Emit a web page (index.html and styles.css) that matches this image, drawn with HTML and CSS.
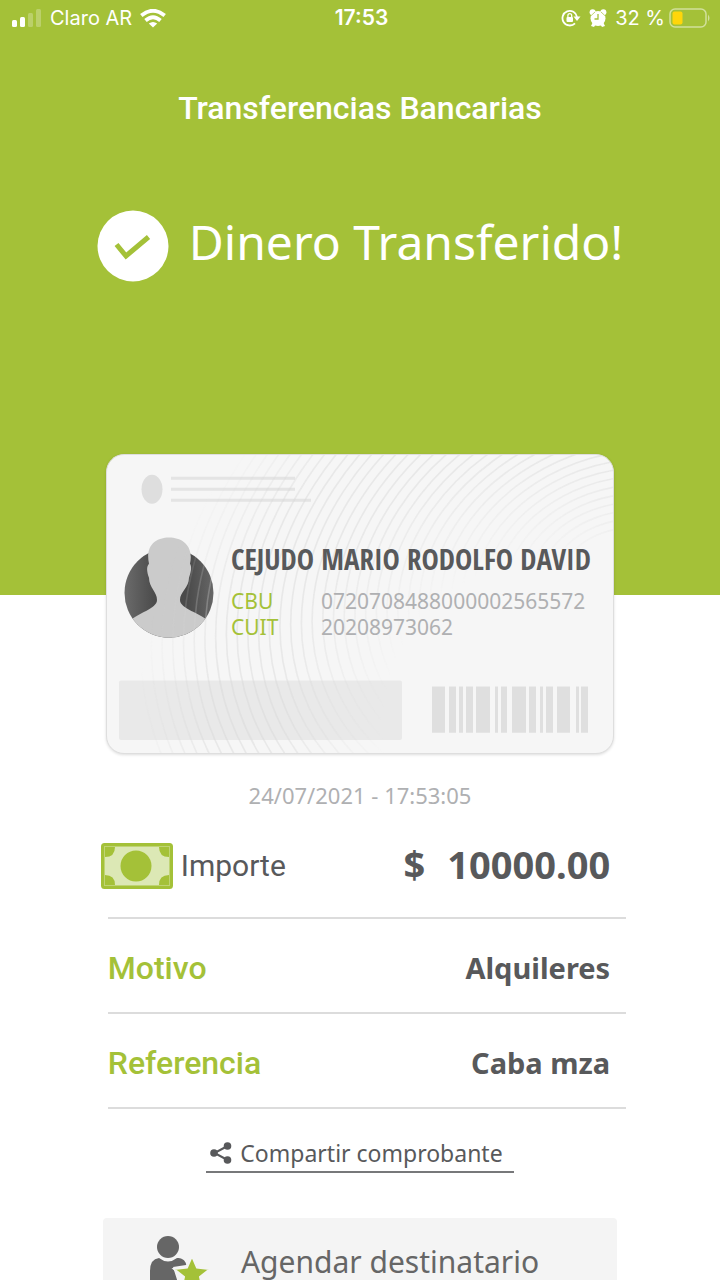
FILE: index.html
```html
<!DOCTYPE html>
<html lang="es">
<head>
<meta charset="utf-8">
<meta name="viewport" content="width=device-width, initial-scale=1">
<title>Transferencias Bancarias</title>
<link rel="stylesheet" href="styles.css">
</head>
<body>
<div class="screen">
  <header class="top">
    <div class="status">
      <div class="status-side">
        <svg width="30" height="18" viewBox="0 0 30 18" fill="#fff" aria-hidden="true"><rect y="11" width="5" height="7" rx="1.5"/><rect x="8" y="8" width="5" height="10" rx="1.5"/><g opacity=".25"><rect x="16" y="4" width="5" height="14" rx="1.5"/><rect x="24" width="5" height="18" rx="1.5"/></g></svg>
        <span>Claro AR</span>
        <svg width="26" height="19" viewBox="0 0 26 19" fill="none" stroke="#fff" stroke-width="3.8" aria-hidden="true"><path d="M1.300 6.500Q13-3 24.700 6.500M5.500 11.500Q13 5 20.500 11.500"/><path d="M13 18.500L8.800 14.600Q13 11.600 17.200 14.600Z" fill="#fff" stroke="none"/></svg>
      </div>
      <time class="clock">17:53</time>
      <div class="status-side status-right">
        <svg width="20" height="18" viewBox="0 0 20 18" fill="none" stroke="#fff" stroke-width="1.800" aria-hidden="true"><path d="M16 8A7.300 7.300 0 1 0 14 14.300"/><path d="M12.500 7.500h7l-3.500 4.500z" fill="#fff" stroke="none"/><rect x="5.500" y="8" width="6.500" height="5" rx="1" fill="#fff" stroke="none"/><path d="M6.900 8V6.500a1.900 1.900 0 0 1 3.800 0V8" stroke-width="1.300"/></svg>
        <svg width="18" height="18" viewBox="0 0 18 18" aria-hidden="true"><g fill="#fff"><circle cx="9" cy="9.500" r="7.500"/><circle cx="3.600" cy="3.300" r="3"/><circle cx="14.400" cy="3.300" r="3"/><path d="M2 17l2-4 3 2-2 3zM16 17l-2-4-3 2 2 3z"/></g><path d="M9 5v5H5.500" fill="none" stroke="#a4c138" stroke-width="1.300"/><path d="M2.200 6.500L6 3M15.800 6.500L12 3" stroke="#a4c138" stroke-width=".7"/></svg>
        <span>32 %</span>
        <svg class="battery" width="42" height="20" viewBox="0 0 42 20" aria-hidden="true"><rect x="1" y="1" width="36" height="18" rx="5" fill="none" stroke="#d1e09b" stroke-width="1.500"/><rect x="3.500" y="3.500" width="10" height="13" rx="2" fill="#ffd60a"/><path d="M39 6.500q3 3.500 0 7z" fill="#d1e09b"/></svg>
      </div>
    </div>
    <h1 class="title">Transferencias Bancarias</h1>
    <div class="hero">
      <svg width="72" height="72" viewBox="0 0 72 72" aria-hidden="true"><circle cx="36" cy="36" r="35.500" fill="#fff"/><path d="M19.500 34.500L29 46L51.500 27" fill="none" stroke="#a4c138" stroke-width="5"/></svg>
      <p class="hero-text">Dinero Transferido!</p>
    </div>
  </header>

  <main class="content">
    <section class="card">
      <svg class="card-art" viewBox="0 0 506 296" preserveAspectRatio="none" aria-hidden="true">
        <defs>
          <radialGradient id="fade" gradientUnits="userSpaceOnUse" cx="440" cy="270" r="410">
            <stop offset=".4" stop-color="#000"/><stop offset=".66" stop-color="#fff"/><stop offset=".82" stop-color="#fff"/><stop offset="1" stop-color="#000"/>
          </radialGradient>
          <mask id="arcs"><rect width="506" height="296" fill="url(#fade)"/></mask>
          <linearGradient id="dark"><stop stop-color="#6b6b6b"/><stop offset=".35" stop-color="#4a4a4a"/><stop offset=".7" stop-color="#4a4a4a"/><stop offset="1" stop-color="#666"/></linearGradient>
          <clipPath id="bust"><path d="M0 0H124V137H106.500A44.500 44.500 0 0 1 17.500 137H0Z"/></clipPath>
        </defs>
        <circle cx="62" cy="137" r="44.500" fill="url(#dark)"/>
        <path clip-path="url(#bust)" d="M42 108C38 90 49 82 62 82S87 90 83 108C85 111 84 116 82 122C82 132 73 136 73 144C73 153 94 157 101 165V190H23V165C30 157 50 153 50 144C50 136 42 132 42 122C40 117 39 111 42 108Z" fill="#cbcbcb"/>
        <ellipse cx="45" cy="34" rx="10.500" ry="14.500" fill="#dedede"/>
        <path d="M64 23H188M64 34H188M64 45H204" stroke="#e4e4e4" stroke-width="3"/>
        <rect x="12" y="224" width="283" height="59" rx="2" fill="#e9e9e9"/>
        <g mask="url(#arcs)"><g id="rings" transform="rotate(-20 510 120)" fill="none" stroke="#d8d8d8" stroke-opacity=".45" stroke-width="1.600"></g></g>
        <path d="M325 230h13v46h-13zM342 230h7v46h-7zM352 230h4v46h-4zM359 230h7v46h-7zM369 230h14v46h-14zM388 230h3v46h-3zM394 230h6v46h-6zM405 230h14v46h-14zM422 230h7v46h-7zM433 230h3v46h-3zM439 230h7v46h-7zM450 230h13v46h-13zM469 230h3v46h-3zM474 230h7v46h-7z" fill="#dfdfdf"/>
      </svg>
      <div class="card-body">
        <h2 class="name">CEJUDO MARIO RODOLFO DAVID</h2>
        <dl class="ids">
          <dt>CBU</dt><dd>0720708488000002565572</dd>
          <dt>CUIT</dt><dd>20208973062</dd>
        </dl>
      </div>
    </section>

    <time class="date">24/07/2021 - 17:53:05</time>

    <dl class="details">
      <div class="row row-amount">
        <dt class="amount-label">
          <svg width="72" height="46" viewBox="0 0 72 46" aria-hidden="true"><rect x="1.500" y="1.500" width="69" height="43" rx="2" fill="#dce8b5" stroke="#a4c138" stroke-width="3"/><path d="M4 4H14Q14 14 4 14ZM68 4H58Q58 14 68 14ZM4 42H14Q14 32 4 32ZM68 42H58Q58 32 68 32Z" fill="#a4c138"/><rect x="3.500" y="3.500" width="65" height="39" fill="none" stroke="#bfd474"/><circle cx="35" cy="23" r="15.500" fill="#a4c138"/></svg>
          <span>Importe</span>
        </dt>
        <dd class="amount"><span>$</span><span>10000.00</span></dd>
      </div>
      <div class="row"><dt>Motivo</dt><dd>Alquileres</dd></div>
      <div class="row"><dt>Referencia</dt><dd>Caba mza</dd></div>
    </dl>

    <a class="share" href="#comprobante">
      <svg width="22" height="22" viewBox="0 0 22 22" fill="#58595b" aria-hidden="true"><path d="M17.500 4L4.500 11L17.500 18" fill="none" stroke="#58595b" stroke-width="2"/><circle cx="17.500" cy="4" r="3.800"/><circle cx="4" cy="11" r="3.800"/><circle cx="17.500" cy="18" r="3.800"/></svg>
      <span>Compartir comprobante</span>
    </a>

    <button class="schedule" type="button">
      <svg width="60" height="54" viewBox="0 0 60 54" aria-hidden="true"><circle cx="19" cy="11" r="11" fill="#666"/><path d="M10 22Q19 29 28 22C34 21 38 27 37 29L24 31L30 50H8Q1 50 1 43V35Q1 23 10 22Z" fill="#666"/><path d="M43 20L48 31.500L61 33L51 41L54 54L43 47L32 54L35 41L25 33L38 31.500Z" fill="#a4c138" stroke="#f4f4f4" stroke-width="2"/></svg>
      <span>Agendar destinatario</span>
    </button>
  </main>
</div>
<script src="rings.js"></script>
</body>
</html>
```
FILE: styles.css
```css
* { box-sizing: border-box; margin: 0; padding: 0; }

body {
  background: #fff;
  color: #58595b;
  font-family: "Noto Sans", "Open Sans", sans-serif;
}

.screen { height: 100vh; overflow: hidden; }

.top { background: #a4c138; color: #fff; padding-bottom: 313px; }

.status {
  display: grid;
  grid-template-columns: 1fr auto 1fr;
  align-items: center;
  height: 36px;
  padding: 0 9px 0 12px;
  font: 20px/24px Inter, sans-serif;
}
.status-side { display: flex; align-items: center; gap: 8px; }
.status-right { justify-content: flex-end; }
.battery { margin-left: -4px; }
.clock { font-size: 21px; font-weight: 600; }

.title {
  padding-top: 54px;
  font: 500 32px/36px Roboto, sans-serif;
  text-align: center;
}

.hero {
  display: flex;
  align-items: center;
  justify-content: center;
  gap: 20px;
  padding-top: 84px;
}
.hero-text { padding-bottom: 8px; font-size: 48px; line-height: 64px; white-space: nowrap; }

.content { display: flex; flex-direction: column; align-items: center; }

.card {
  position: relative;
  width: 100%;
  max-width: 508px;
  margin-top: -141px;
  border: 1px solid #dedede;
  border-radius: 18px;
  background: #f6f6f6;
  box-shadow: 0 1px 3px #0002;
  overflow: hidden;
}
.card-art { position: absolute; inset: 0; width: 100%; height: 100%; }
.card-body { position: relative; padding: 84px 16px 114px 124px; }
.name {
  font: 700 29px/40px "Liberation Sans Narrow", "Open Sans Condensed", "Noto Sans", sans-serif;
  white-space: nowrap;
}
.ids {
  display: grid;
  grid-template-columns: 90px 1fr;
  row-gap: 2px;
  padding-top: 10px;
  font-size: 21px;
  line-height: 24px;
}
.ids dt { color: #a4c138; }
.ids dd { color: #afb0b2; }

.date { margin-top: 25px; color: #afb0b2; font-size: 22px; line-height: 32px; }

.details { width: 72%; margin-left: 14px; }
.row {
  display: flex;
  align-items: center;
  justify-content: space-between;
  height: 95px;
  padding: 4px 16px 0 0;
  border-bottom: 2px solid #dcdcdc;
}
.row dt { color: #a4c138; font: 500 32px/40px Roboto, sans-serif; }
.row dd { font-size: 29px; font-weight: 700; line-height: 40px; }
.row-amount { height: 108px; padding-top: 0; }
.row .amount-label {
  display: flex;
  align-items: center;
  gap: 8px;
  margin-left: -7px;
  padding-top: 4px;
  color: #58595b;
  font-size: 30px;
  font-weight: 400;
}
.row .amount { display: flex; gap: 22px; font-size: 38px; }

.share {
  display: flex;
  align-items: center;
  gap: 8px;
  margin-top: 26px;
  padding: 0 11px 0 4px;
  border-bottom: 2px solid #77787a;
  color: #58595b;
  font-size: 23px;
  line-height: 36px;
  text-decoration: none;
  white-space: nowrap;
}

.schedule {
  display: flex;
  align-items: flex-start;
  gap: 32px;
  width: 71.400%;
  margin-top: 45px;
  padding: 18px 0 18px 46px;
  border: 0;
  border-radius: 4px;
  background: #f4f4f4;
  color: #666;
  font: 30px/52px "Noto Sans", sans-serif;
  white-space: nowrap;
}
```
FILE: rings.js
```js
const rings = document.getElementById("rings");
for (let r = 60; r < 500; r += 11) {
  const e = document.createElementNS("http://www.w3.org/2000/svg", "ellipse");
  e.setAttribute("cx", 510);
  e.setAttribute("cy", 120);
  e.setAttribute("rx", r);
  e.setAttribute("ry", r * 0.75);
  rings.append(e);
}
```
